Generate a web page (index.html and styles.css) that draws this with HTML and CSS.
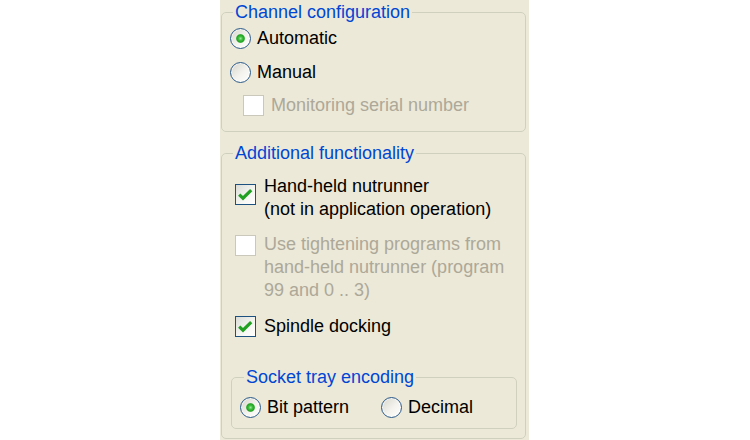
FILE: index.html
```html
<!DOCTYPE html>
<html>
<head>
<meta charset="utf-8">
<link rel="stylesheet" href="styles.css">
</head>
<body>
<div class="panel">
  <fieldset class="group group-channel">
    <legend class="group-title">Channel configuration</legend>
    <div class="rows">
      <div class="option"><span class="radio checked"></span><span class="label">Automatic</span></div>
      <div class="option"><span class="radio"></span><span class="label">Manual</span></div>
      <div class="option option-sub disabled"><span class="check"></span><span class="label">Monitoring serial number</span></div>
    </div>
  </fieldset>

  <fieldset class="group group-extra">
    <legend class="group-title">Additional functionality</legend>
    <div class="item item-handheld">
      <span class="check checked"><svg viewBox="0 0 19 19" width="19" height="19"><path d="M3.2 9.6 L7 13.2 L15.2 5.2" fill="none" stroke="#21A121" stroke-width="3.2"/></svg></span>
      <span class="text">Hand-held nutrunner<br>(not in application operation)</span>
    </div>
    <div class="item item-programs disabled">
      <span class="check"></span>
      <span class="text">Use tightening programs from<br>hand-held nutrunner (program<br>99 and 0 .. 3)</span>
    </div>
    <div class="item item-docking">
      <span class="check checked"><svg viewBox="0 0 19 19" width="19" height="19"><path d="M3.2 9.6 L7 13.2 L15.2 5.2" fill="none" stroke="#21A121" stroke-width="3.2"/></svg></span>
      <span class="text">Spindle docking</span>
    </div>

    <fieldset class="group group-tray">
      <legend class="group-title">Socket tray encoding</legend>
      <div class="tray-row">
        <div class="option option-bit"><span class="radio checked"></span><span class="label">Bit pattern</span></div>
        <div class="option"><span class="radio"></span><span class="label">Decimal</span></div>
      </div>
    </fieldset>
  </fieldset>
</div>
</body>
</html>
```
FILE: styles.css
```css
html, body {
  margin: 0;
  padding: 0;
  background: #ffffff;
  overflow: hidden;
}

body {
  font-family: "Liberation Sans", Arial, sans-serif;
  font-size: 18px;
  color: #000000;
}

.panel {
  width: 309px;
  height: 440px;
  margin-left: 220px;
  box-sizing: border-box;
  padding: 2px 0 0 1px;
  background: #ECE9D8;
}

.group {
  margin: 0;
  width: 305px;
  box-sizing: border-box;
  border: 1px solid #D0D0BF;
  border-radius: 5px;
  padding: 0 8px 10px 8px;
  min-width: 0;
}

.group-title {
  color: #0046D5;
  line-height: 20px;
  padding: 0 2px;
  margin-left: 3px;
}

.rows {
  margin-top: -1px;
}

.option {
  display: flex;
  align-items: center;
  height: 34px;
}

.option-sub {
  height: 32px;
  padding-left: 13px;
}

.label {
  margin-left: 6px;
  white-space: nowrap;
}

.option-sub .label {
  margin-left: 7px;
}

.radio {
  flex: none;
  width: 21px;
  height: 21px;
  box-sizing: border-box;
  border: 1px solid #2A5A8A;
  border-radius: 50%;
  background: linear-gradient(135deg, #D6D4CA 0%, #F4F3EE 55%, #FFFFFF 100%);
  box-shadow: inset 0 0 0 1px rgba(255, 255, 255, 0.6);
}

.radio.checked {
  background:
    radial-gradient(circle at 50% 50%, #9BE89B 0, #3CBE3C 2px, #21A121 3.8px, rgba(33, 161, 33, 0) 4.8px),
    linear-gradient(135deg, #D6D4CA 0%, #F4F3EE 55%, #FFFFFF 100%);
}

.check {
  flex: none;
  width: 21px;
  height: 21px;
  box-sizing: border-box;
  border: 1px solid #1C5180;
  background: linear-gradient(135deg, #DCDCD7 0%, #F6F6F3 60%, #FFFFFF 100%);
  display: flex;
  align-items: center;
  justify-content: center;
}

.disabled {
  color: #ACA899;
}

.disabled .check {
  border-color: #CAC8BB;
  background: #FFFFFF;
}

.group-extra {
  margin-top: 11px;
  padding-bottom: 9px;
}

.item {
  display: flex;
  align-items: flex-start;
  padding-left: 5px;
  line-height: 23px;
}

.item .text {
  margin-left: 8px;
  white-space: nowrap;
}

.item-handheld {
  margin-top: 12px;
}

.item-handheld .check {
  margin-top: 9px;
}

.item-programs {
  margin-top: 12px;
}

.item-programs .check {
  margin-top: 2px;
}

.item-docking {
  margin-top: 13px;
  align-items: center;
}

.group-tray {
  width: 286px;
  margin: 29px 0 0 1px;
  padding: 0 8px 0 8px;
}

.group-tray .group-title {
  margin-left: 4px;
}

.tray-row {
  display: flex;
  align-items: center;
  height: 41px;
}

.tray-row .option {
  height: 41px;
}

.tray-row .label {
  margin-left: 6px;
}

.option-bit {
  width: 141px;
}
```
